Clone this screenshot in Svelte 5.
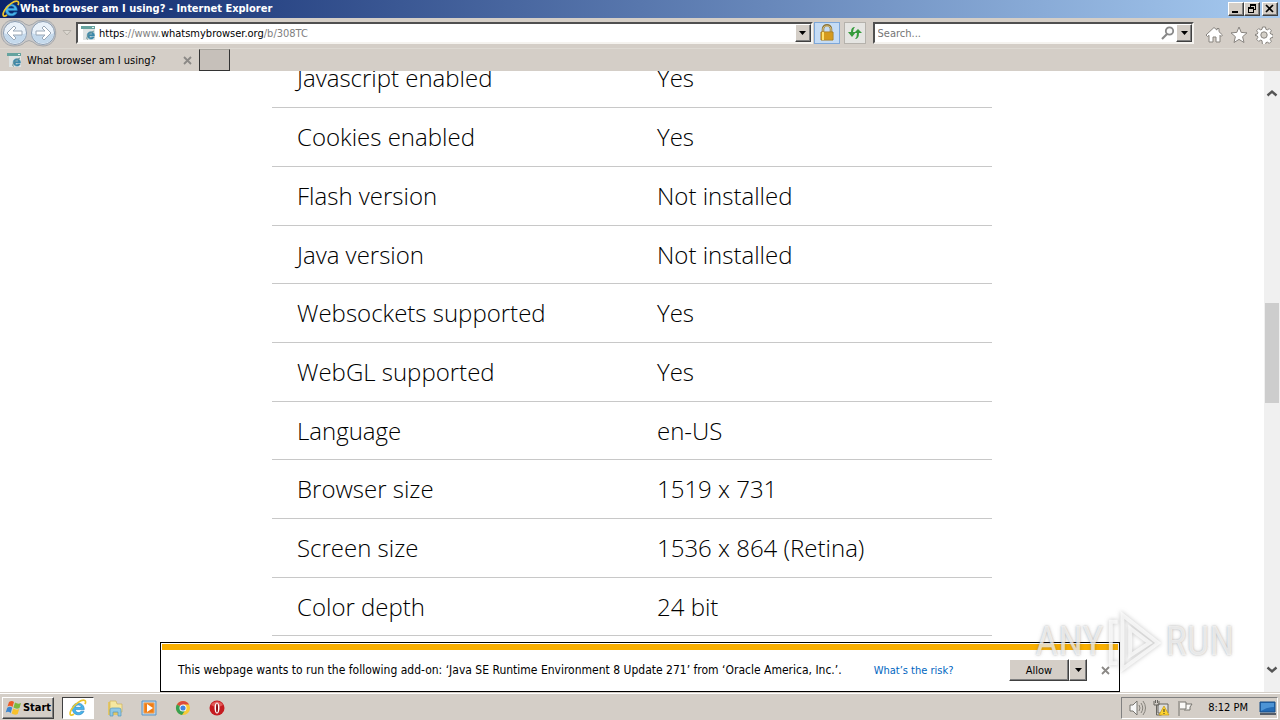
<script>
  const rows = [
    ['Javascript enabled', 'Yes'],
    ['Cookies enabled', 'Yes'],
    ['Flash version', 'Not installed'],
    ['Java version', 'Not installed'],
    ['Websockets supported', 'Yes'],
    ['WebGL supported', 'Yes'],
    ['Language', 'en-US'],
    ['Browser size', '1519 x 731'],
    ['Screen size', '1536 x 864 (Retina)'],
    ['Color depth', '24 bit']
  ];
</script>

{#snippet ie()}
  <svg viewBox="0 0 16 16" aria-hidden="true">
    <path d="M13.6 9.4H5.6c.2 3 4 3.500 5 1.400h2.800C11 16.200 2.900 14.600 2.900 8.700c0-6.600 10.700-7 10.700.7ZM5.700 7.400h5.100c-.2-2.700-4.700-2.800-5.100 0Z" fill="#48b5eb" stroke="#237ebc" stroke-width=".5" />
    <path d="M4.500 13.400C.5 16 .2 12.900 2.200 9.200 4.900 4.300 11.500.1 14 1.300c1 .5.9 1.900.2 3.300" fill="none" stroke="#edc62e" stroke-width="1.500" />
  </svg>
{/snippet}

{#snippet pageIcon()}
  <svg viewBox="0 0 16 16" aria-hidden="true">
    <path d="M2 2h12v13H2z" fill="#dfe4e4" />
    <path d="M0 1h14v3H0z" fill="#65a39f" />
    <path d="M11 2h2v1h-2z" fill="#e6f4f2" />
    <path d="M13.500 11H8.300c.2 1.800 1.800 1.900 2.500.9h2.400c-1.300 3.600-7 2.600-7-1.600 0-5 7.700-5 7.300.7ZM8.300 9.500h3c-.2-1.600-2.700-1.600-3 0Z" fill="#3a87a8" stroke="#3a87a8" stroke-width=".5" />
    <path d="M7 14c-3 1.200-.5-5.500 6-8" fill="none" stroke="#6c9292" />
  </svg>
{/snippet}

{#snippet caret()}
  <svg class="caret" viewBox="0 0 7 4" aria-hidden="true"><path d="M0 0h7L3.500 4Z" fill="#000" /></svg>
{/snippet}

{#snippet cross()}
  <svg class="cross" viewBox="0 0 9 9" aria-hidden="true"><path d="m1 1 7 7M8 1 1 8" stroke="#8b8986" stroke-width="1.800" /></svg>
{/snippet}

<div class="desktop">
  <header class="title">
    <span class="i16">{@render ie()}</span>
    <h1>What browser am I using? - Internet Explorer</h1>
    <button class="raised win" aria-label="Minimize"><svg viewBox="0 0 12 10"><path d="M2 7h6v2H2z" /></svg></button>
    <button class="raised win" aria-label="Restore"><svg viewBox="0 0 12 10"><path d="M4 0h6v6H8V5h1V2H5v1H4ZM2 3h6v6H2Zm1 2v3h4V5Z" fill-rule="evenodd" /></svg></button>
    <button class="raised win close" aria-label="Close"><svg viewBox="0 0 12 10"><path d="m2 1 7 7M9 1 2 8" stroke="#000" stroke-width="1.700" /></svg></button>
  </header>

  <nav class="toolbar" aria-label="Navigation">
    <div class="history">
      <svg class="plate" viewBox="0 0 58 28" aria-hidden="true">
        <path d="M14 1q8 0 11 4 4 3 8 0 3-4 10-4c17 0 17 26 0 26q-7 0-10-4-4-3-8 0-3 4-11 4C-3 27-3 1 14 1Z" fill="#c9c9ca" stroke="#a6a8ab" />
      </svg>
      <button aria-label="Back"><svg viewBox="0 0 26 26"><circle cx="13" cy="13" r="11.500" fill="#e9f1f9" stroke="#8b9db2" /><path d="M2 13c5 3 17 3 22 0-1 14-21 14-22 0Z" fill="#c4d9ec" /><path d="m12 6-7 7 7 7 2-2-3-3h9v-4h-9l3-3Z" fill="#fff" stroke="#9aa8b7" /></svg></button>
      <button aria-label="Forward"><svg viewBox="0 0 26 26"><circle cx="13" cy="13" r="11.500" fill="#e9f1f9" stroke="#8b9db2" /><path d="M2 13c5 3 17 3 22 0-1 14-21 14-22 0Z" fill="#c4d9ec" /><path d="m14 6 7 7-7 7-2-2 3-3H6v-4h9l-3-3Z" fill="#fff" stroke="#9aa8b7" /></svg></button>
    </div>
    <button class="recent" aria-label="Recent pages"><svg viewBox="0 0 10 6"><path d="M1 .5h8L5 5Z" fill="#ddd9d2" stroke="#b5b1aa" /></svg></button>
    <div class="field address">
      <span class="i16">{@render pageIcon()}</span>
      <a class="url" href="#address">https<i>://www.</i>whatsmybrowser.org<i>/b/308TC</i></a>
      <button class="raised drop" aria-label="Address history">{@render caret()}</button>
    </div>
    <button class="tool lock" aria-label="Security report"><svg viewBox="0 0 16 18"><path d="M4 9V5c0-5 8-5 8 0v4" fill="none" stroke="#8c7438" stroke-width="2.500" /><path d="M4 9V5c0-4 8-4 8 0v4" fill="none" stroke="#e4cf91" /><path d="M2 8h12v8H2z" fill="#e7ae24" stroke="#a8781a" /><path d="M3 10h10M3 12h10M3 14h10" stroke="#c48614" /><path d="M4 8v8" stroke="#ffe16d" stroke-width="2" /></svg></button>
    <button class="tool refresh" aria-label="Refresh"><svg viewBox="0 0 16 16"><path d="M8 2Q4 2 4 7H1l4 5 4-5H6q0-3 2-5ZM8 14q4 0 4-6h3l-4-4-4 4h3q0 4-2 6Z" fill="#359b3b" /></svg></button>
    <div class="field search">
      <input type="text" placeholder="Search..." aria-label="Search" />
      <button class="plain" aria-label="Start search"><svg viewBox="0 0 14 14"><circle cx="8.500" cy="5" r="3.700" fill="#fafafa" stroke="#888" stroke-width="1.800" /><path d="M6 8 1 13" stroke="#888" stroke-width="2.200" /></svg></button>
      <button class="raised drop" aria-label="Search options">{@render caret()}</button>
    </div>
    <div class="actions">
      <button class="plain" aria-label="Home"><svg viewBox="0 0 18 18"><path d="M9 1.500 1 9l1.500 1.500L4 9.300V16h4v-5h3v5h4V9.300l1 1.200L17.500 9 14 5.700V2.500h-2v1.600Z" fill="#fff" stroke="#88847f" /></svg></button>
      <button class="plain" aria-label="Favorites"><svg viewBox="0 0 18 18"><path d="m9 1 2.200 5.400 5.800.5-4.400 3.800 1.400 5.800L9 13.400l-5 3.100 1.400-5.800L1 6.900l5.800-.5Z" fill="#fff" stroke="#88847f" /></svg></button>
      <button class="plain" aria-label="Tools"><svg viewBox="0 0 18 18"><path d="M7.500 1h3l.4 2.300 1.400.6 2-1.300 2.100 2.100-1.300 2 .6 1.300 2.300.5v3l-2.300.4-.6 1.400 1.300 2-2.100 2.100-2-1.300-1.400.6-.4 2.300h-3L7 14.700l-1.300-.6-2 1.300-2.100-2.100 1.300-2-.6-1.400L0 9.500v-1L2.300 8l.6-1.300-1.300-2 2.100-2.100 2 1.300L7 3.300Z" fill="#fff" stroke="#88847f" /><circle cx="9" cy="9" r="3.200" fill="#d4d0c8" stroke="#88847f" /></svg></button>
    </div>
  </nav>

  <div class="tabs">
    <div class="tab">
      <span class="i16">{@render pageIcon()}</span>
      <span class="tabname">What browser am I using?</span>
      <button class="plain" aria-label="Close tab">{@render cross()}</button>
    </div>
    <button class="newtab" aria-label="New tab"></button>
  </div>

  <main>
    <div class="view">
      <table>
        <tbody>
          {#each rows as [name, value]}
            <tr><th scope="row">{name}</th><td>{value}</td></tr>
          {/each}
        </tbody>
      </table>
    </div>
    <div class="scroll">
      <button class="plain" aria-label="Scroll up"><svg viewBox="0 0 12 8"><path d="m1.500 6.500 4.500-4 4.500 4" /></svg></button>
      <div class="track"><div class="thumb"></div></div>
      <button class="plain" aria-label="Scroll down"><svg viewBox="0 0 12 8"><path d="m1.500 1.500 4.500 4 4.500-4" /></svg></button>
    </div>

    <aside class="notice">
      <p>This webpage wants to run the following add-on: ‘Java SE Runtime Environment 8 Update 271’ from ‘Oracle America, Inc.’.</p>
      <a href="#risk">What’s the risk?</a>
      <div class="split">
        <button class="raised allow">Allow</button>
        <button class="raised more" aria-label="More options">{@render caret()}</button>
      </div>
      <button class="plain" aria-label="Dismiss">{@render cross()}</button>
    </aside>

    <div class="mark">
      <span>ANY</span>
      <svg viewBox="0 0 60 64" aria-hidden="true"><path d="M17 4v56l37-27ZM25 18v28l20-13ZM12 11H5v43h7" /></svg>
      <span>RUN</span>
    </div>
  </main>

  <footer class="taskbar">
    <button class="raised start">
      <svg viewBox="0 0 18 18" aria-hidden="true"><path d="M4 3q3-2 5 0L7.500 8Q5 6 2.500 7.500Z" fill="#ee5a24" /><path d="M10 3.500q3 2 6 .5L14.500 9q-3 1.500-6-.5Z" fill="#7cb83c" /><path d="M2.200 8.700q3-2 5 0L5.700 14q-2.500-2-5-.5Z" fill="#3c86d0" /><path d="M8.200 9.500q3 2 6 .5l-1.500 5q-3 1.500-6-.5Z" fill="#f8c12c" /></svg>
      Start
    </button>
    <button class="app active" aria-label="Internet Explorer">{@render ie()}</button>
    <button class="app" aria-label="File Explorer"><svg viewBox="0 0 18 18"><path d="M2 3h5l1 2h7v11H2z" fill="#e4c664" /><path d="M4 2h6l1 3h5v8H4z" fill="#f5e7a0" stroke="#ceb35b" stroke-width=".7" /><path d="M4 17v-6q0-2 2-2h7q2 0 2 2v6h-3v-4H7v4Z" fill="#90c8e5" stroke="#5799bd" stroke-width=".7" /></svg></button>
    <button class="app" aria-label="Media Player"><svg viewBox="0 0 18 18"><path d="M2 2h14v14H2z" fill="#b5d4ee" stroke="#5d94c5" /><path d="M4 4h10v10H4z" fill="#ef7d16" stroke="#f5a04e" /><path d="m7 5 6 4-6 4Z" fill="#fff" /></svg></button>
    <button class="app" aria-label="Chrome"><svg viewBox="0 0 18 18"><circle cx="9" cy="9" r="7" fill="#f7ca38" /><path d="M9 9 2.900 5.500A7 7 0 0 1 15.100 5.500H9Z" fill="#dc4a3d" /><path d="M2.900 5.500A7 7 0 0 0 8 16l3.700-5.500L9 9Z" fill="#38a053" /><circle cx="9" cy="9" r="3.500" fill="#fff" /><circle cx="9" cy="9" r="2.600" fill="#4385df" /></svg></button>
    <button class="app" aria-label="Opera"><svg viewBox="0 0 18 18"><circle cx="9" cy="9" r="7.500" fill="#c51b20" /><path d="M3 6a7 7 0 0 1 12 0q-6 4-12 0Z" fill="#e25a57" /><ellipse cx="9" cy="9" rx="2.500" ry="5.500" fill="#fff" /><ellipse cx="9" cy="9" rx="1" ry="4.500" fill="#8c1014" /></svg></button>
    <div class="tray">
      <svg viewBox="0 0 18 18" role="img" aria-label="Volume"><path d="M2 6h3l4-4v14l-4-4H2Z" fill="#f7f7f7" stroke="#77756f" /><path d="M11 6q2 3 0 6M13 4q3.500 5 0 10M15 2q5 7 0 14" fill="none" stroke="#85827b" /></svg>
      <svg viewBox="0 0 18 18" role="img" aria-label="Network warning"><path d="M6 5h10v9H6z" fill="#ddd" stroke="#66645f" /><path d="M2 2v4h5V2M3.500 1v3M5.500 1v3M4.500 6v10h5" fill="none" stroke="#66645f" /><path d="m12 7 5 9H7Z" fill="#ffd42f" stroke="#c69a12" stroke-width=".7" /><path d="M12 10v3M12 14v1" stroke="#333" /></svg>
      <svg class="flag" viewBox="0 0 18 18" role="img" aria-label="Action center"><path d="M3 2v15M4 3h6v7H4M10 5h6l-2 3v3H8" fill="#faf9f7" stroke="#77756f" /></svg>
      <time>8:12 PM</time>
      <svg viewBox="0 0 18 18" role="img" aria-label="Show desktop"><path d="M2 3h15v10H2z" fill="#246bb5" stroke="#174c85" /><path d="M3 4h13v4Q9 8 3 12Z" fill="#4d94d5" /><path d="M2 14h16v2H2z" fill="#555d68" /></svg>
    </div>
  </footer>
</div>

<style>
  :global(body) { margin: 0; overflow: hidden; }
  * { box-sizing: border-box; }
  .desktop {
    display: flex; flex-direction: column; height: 100vh;
    background: #d4cec7; color: #000;
    font-family: "DejaVu Sans Condensed", "DejaVu Sans", sans-serif; font-stretch: condensed; font-size: 11px;
  }
  button { padding: 0; border: 0; background: none; color: inherit; font: inherit; display: flex; align-items: center; justify-content: center; flex: none; }
  svg { display: block; flex: none; }
  .i16 { width: 16px; height: 16px; flex: none; }
  .raised { background: #d4cec7; border: 1px solid; border-color: #fff #404040 #404040 #fff; box-shadow: inset -1px -1px #808080; }
  .caret { width: 7px; height: 4px; }
  .cross { width: 9px; height: 9px; }

  .title { display: flex; align-items: center; height: 18px; padding: 0 2px; background: linear-gradient(90deg, #0a246a, #a6caf0); color: #fff; }
  .title .i16 { width: 18px; height: 18px; }
  h1 { flex: 1; margin: 0; font-size: 11px; font-weight: 700; line-height: 18px; white-space: nowrap; }
  .win { width: 16px; height: 14px; }
  .win svg { width: 12px; height: 10px; }
  .close { margin-left: 2px; }

  .toolbar { display: flex; align-items: center; height: 30px; padding-right: 7px; }
  .history { position: relative; display: flex; gap: 2px; padding: 0 2px; }
  .history button { position: relative; width: 26px; height: 26px; }
  .history button svg { width: 26px; height: 26px; }
  .plate { position: absolute; left: 0; top: -1px; width: 58px; height: 28px; }
  .recent { width: 18px; }
  .recent svg { width: 10px; height: 6px; }
  .field { display: flex; align-items: center; min-width: 0; height: 22px; background: #fff; border: 2px solid; border-color: #505050 #f5f3ef #f5f3ef #505050; }
  .address { flex: 740 1 0; padding-left: 3px; gap: 2px; }
  .url { flex: 1; color: #000; text-decoration: none; white-space: nowrap; }
  i { color: #808080; font-style: normal; }
  .drop { width: 16px; height: 18px; }
  .tool { height: 22px; border: 1px solid #b5b2ac; background: #e5e5e2; }
  .tool svg { width: 16px; height: 18px; }
  .lock { width: 26px; margin-left: 1px; border-color: #7da7d8; background: #c5dcf5; }
  .refresh { width: 22px; margin: 0 7px 0 4px; }
  .search { flex: 319 1 0; padding-left: 3px; }
  .address, .search { box-sizing: border-box; }
  input { flex: 1; min-width: 0; padding: 0; border: 0; outline: 0; font: inherit; }
  input::placeholder { color: #757575; opacity: 1; }
  .search .plain svg { width: 14px; height: 14px; margin-right: 1px; }
  .actions { display: flex; gap: 7px; padding: 3px 0 0 11px; }
  .actions svg { width: 18px; height: 18px; }

  .tabs { display: flex; height: 23px; border-top: 1px solid #ddd9d2; }
  .tab { display: flex; align-items: center; width: 198px; padding: 0 6px 0 7px; gap: 4px; }
  .tabname { flex: 1; white-space: nowrap; }
  .newtab { width: 31px; height: 22px; margin-left: 1px; background: #c6c0ba; border: 1px solid; border-color: #aaa69f #333 #333 #333; }

  main { position: relative; display: flex; flex: 1; min-height: 0; background: #fff; }
  .view { flex: 1; min-width: 0; overflow: hidden; }
  table { width: 720px; max-width: 100%; margin: -22px auto 0; border-collapse: separate; border-spacing: 0; table-layout: fixed; font-family: "Open Sans", sans-serif; font-stretch: normal; font-size: 24px; font-weight: 300; }
  th, td { height: 59px; padding: 0 25px; border-bottom: 1px solid #c8c8c8; font-weight: 300; text-align: left; line-height: 32px; white-space: nowrap; }
  tr:nth-child(3n + 4) > * { height: 58px; }
  .scroll { display: flex; flex-direction: column; width: 16px; padding: 15px 1px; background: #f0f0f0; }
  .scroll button { height: 14px; }
  .scroll svg { width: 12px; height: 8px; fill: none; stroke: #555; stroke-width: 2.4; }
  .track { flex: 1; display: flex; flex-direction: column; }
  .track::before { content: ""; flex: 203; }
  .track::after { content: ""; flex: 260; }
  .thumb { flex: 100; background: #cdcdcd; }

  .notice { position: absolute; left: 12.5%; right: 12.5%; bottom: 0; display: flex; align-items: center; height: 50px; padding: 0 9px 0 15px; border: 1px solid #000; background: #fff; }
  .notice::before { content: ""; position: absolute; left: 1px; right: 1px; top: 1px; height: 6px; background: #f9af00; }
  .notice > * { margin-top: 6px; }
  .notice p { margin-bottom: 0; margin-left: 2px; font-size: 12px; white-space: nowrap; }
  .notice a { margin-left: 32px; color: #0066bf; text-decoration: none; white-space: nowrap; }
  .split { display: flex; margin-left: auto; margin-right: 14px; }
  .allow { width: 60px; height: 22px; }
  .more { width: 18px; height: 22px; }

  .mark { position: absolute; right: 46px; bottom: 18px; display: flex; align-items: center; gap: 2px; color: rgb(255 255 255 / 70%); font: 40px/64px "Liberation Sans Narrow", "Roboto Condensed", sans-serif; text-shadow: 0 0 2px rgb(90 90 90 / 40%), 0 0 4px rgb(90 90 90 / 20%); pointer-events: none; }
  .mark svg { width: 58px; height: 62px; fill: none; stroke: rgb(255 255 255 / 70%); stroke-width: 4; filter: drop-shadow(0 0 2px rgb(90 90 90 / 50%)); }

  .taskbar { display: flex; align-items: center; height: 28px; padding: 2px 2px 0; gap: 8px; border-top: 1px solid #d4cec7; box-shadow: inset 0 1px #fff; }
  .start { width: 52px; height: 22px; font-size: 11px; font-weight: 700; }
  .start svg { width: 18px; height: 18px; }
  .app { width: 26px; height: 22px; }
  .app svg { width: 18px; height: 18px; }
  .active { width: 32px; background: #fff; border: 1px solid; border-color: #404040 #fff #fff #404040; }
  .tray { display: flex; align-items: center; height: 22px; margin-left: auto; padding: 0 1px 0 6px; gap: 6px; border: 1px solid; border-color: #808080 #fff #fff #808080; }
  .tray svg { width: 18px; height: 18px; }
  time { padding: 0 4px 0 8px; white-space: nowrap; }
</style>
